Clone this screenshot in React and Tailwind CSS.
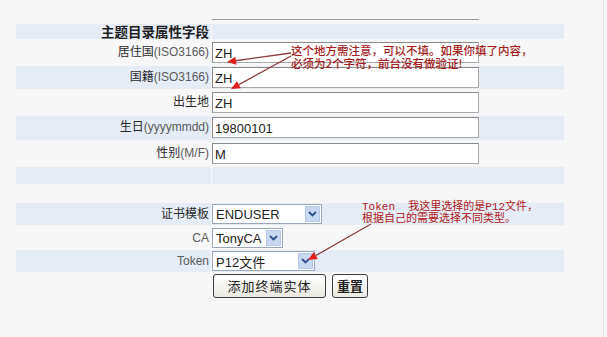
import React from "react";

const FONT = { fontFamily: '"Liberation Sans", "Noto Sans CJK SC", Arial, sans-serif' };
const CJK = { fontFamily: '"Noto Sans CJK SC", "Liberation Sans", sans-serif' };

function Row({ h, band, label, children, labelCls = "" }) {
  const bg = band ? "bg-[#e5ecf6]" : "";
  return (
    <div className={`flex gap-px ${h}`}>
      <div className={`w-[195px] flex items-start justify-end pr-[2px] ${bg} ${labelCls}`}>{label}</div>
      <div className={`w-[352px] ${bg}`}>{children}</div>
    </div>
  );
}

function Label({ cn, en }) {
  return (
    <span className="text-[12px] leading-[14px] pt-[3px] whitespace-nowrap">
      <span className="text-[#2a2a2a]" style={CJK}>{cn}</span>
      {en && <span className="text-[#5a5a5a]" style={FONT}>{en}</span>}
    </span>
  );
}

function Input({ value }) {
  return (
    <div className="mt-px w-[267px] h-[21px] bg-white border border-[#a9a9a9] border-t-[#8a8a8a] border-l-[#8a8a8a] pl-[2px] pt-[3px] text-[13px] leading-[15px] text-[#222]" style={FONT}>
      {value}
    </div>
  );
}

function Chevron() {
  return (
    <svg width="9" height="6" viewBox="0 0 9 6">
      <path d="M1 1 L4.5 4.5 L8 1" fill="none" stroke="#2d4f8f" strokeWidth="1.8" />
    </svg>
  );
}

function Select({ value, w }) {
  return (
    <div className={`mt-px ${w} h-[20px] bg-white border border-[#9aa7b8] flex items-stretch`}>
      <div className="flex-1 pl-[3px] pt-[2px] text-[13px] leading-[15px] text-[#222]" style={FONT}>{value}</div>
      <div className="w-[15px] m-px bg-[#c9d8f2] border border-[#b5c7e8] flex items-center justify-center">
        <Chevron />
      </div>
    </div>
  );
}

function Arrow({ x1, y1, x2, y2 }) {
  const ang = Math.atan2(y2 - y1, x2 - x1);
  const L = 9, W = 4;
  const bx = x2 - L * Math.cos(ang), by = y2 - L * Math.sin(ang);
  const px = -Math.sin(ang) * W, py = Math.cos(ang) * W;
  return (
    <g>
      <line x1={x1} y1={y1} x2={bx} y2={by} stroke="#8c4040" strokeWidth="1.3" />
      <polygon points={`${x2},${y2} ${bx + px},${by + py} ${bx - px},${by - py}`} fill="#e01e1e" />
    </g>
  );
}

export default function App() {
  return (
    <div className="relative w-[607px] h-[337px] bg-[#f7f7f7] overflow-hidden" style={FONT}>
      <div className="absolute right-[3px] top-0 h-full w-px bg-[#e2e2e2]" />
      <div className="pl-[16px] flex flex-col gap-[2px]">
        <Row h="h-[22px]" band={false}>
          <div className="mt-[19px] w-[267px] h-px bg-[#9d9d9d]" />
        </Row>
        <Row h="h-[15px]" band label={
          <span className="text-[13.5px] leading-[15px] font-bold text-[#1e1e1e]" style={CJK}>主题目录属性字段</span>
        } />
        <Row h="h-[23px]" band={false} label={<Label cn="居住国" en="(ISO3166)" />}>
          <Input value="ZH" />
        </Row>
        <Row h="h-[23px]" band label={<Label cn="国籍" en="(ISO3166)" />}>
          <Input value="ZH" />
        </Row>
        <Row h="h-[23px]" band={false} label={<Label cn="出生地" />}>
          <Input value="ZH" />
        </Row>
        <Row h="h-[24px]" band label={<Label cn="生日" en="(yyyymmdd)" />}>
          <Input value="19800101" />
        </Row>
        <Row h="h-[23px]" band={false} label={<Label cn="性别" en="(M/F)" />}>
          <Input value="M" />
        </Row>
        <Row h="h-[17px]" band />
        <Row h="h-[15px]" band={false} />
        <Row h="h-[22px]" band label={<Label cn="证书模板" />}>
          <Select value="ENDUSER" w="w-[110px]" />
        </Row>
        <Row h="h-[21px]" band={false} label={<Label cn="" en="CA" />}>
          <Select value="TonyCA" w="w-[71px]" />
        </Row>
        <Row h="h-[22px]" band label={<Label cn="" en="Token" />}>
          <Select value={<span>P12<span style={CJK}>文件</span></span>} w="w-[103px]" />
        </Row>
        <div className="flex gap-px h-[25px]">
          <div className="w-[196px]" />
          <div className="flex gap-[6px]">
            <button className="w-[113px] h-[24px] rounded-[3px] border border-[#3d3d3d] bg-gradient-to-b from-white to-[#e9e8e0] text-[13px] leading-[20px] text-[#222] tracking-[1px]" style={CJK}>添加终端实体</button>
            <button className="w-[36px] h-[24px] rounded-[3px] border border-[#3d3d3d] bg-gradient-to-b from-white to-[#e9e8e0] text-[13px] leading-[20px] font-bold text-[#222]" style={CJK}>重置</button>
          </div>
        </div>
      </div>

      <div className="absolute left-[291px] top-[44px] text-[11.5px] leading-[13px] font-medium text-[#a51c1c] whitespace-nowrap" style={CJK}>
        <div>这个地方需注意，可以不填。如果你填了内容，</div>
        <div>必须为2个字符，前台没有做验证!</div>
      </div>
      <div className="absolute left-[362px] top-[201px] text-[11px] leading-[12px] text-[#b01818] whitespace-nowrap" style={{ fontFamily: '"Liberation Mono", "Noto Sans CJK SC", monospace' }}>
        <div>Token&nbsp;&nbsp;我这里选择的是P12文件，</div>
        <div>根据自己的需要选择不同类型。</div>
      </div>

      <svg className="absolute left-0 top-0 pointer-events-none" width="607" height="337">
        <Arrow x1={291} y1={53} x2={227} y2={62} />
        <Arrow x1={291} y1={56} x2={231} y2={89} />
        <Arrow x1={371} y1={224} x2={308} y2={260} />
      </svg>
    </div>
  );
}
